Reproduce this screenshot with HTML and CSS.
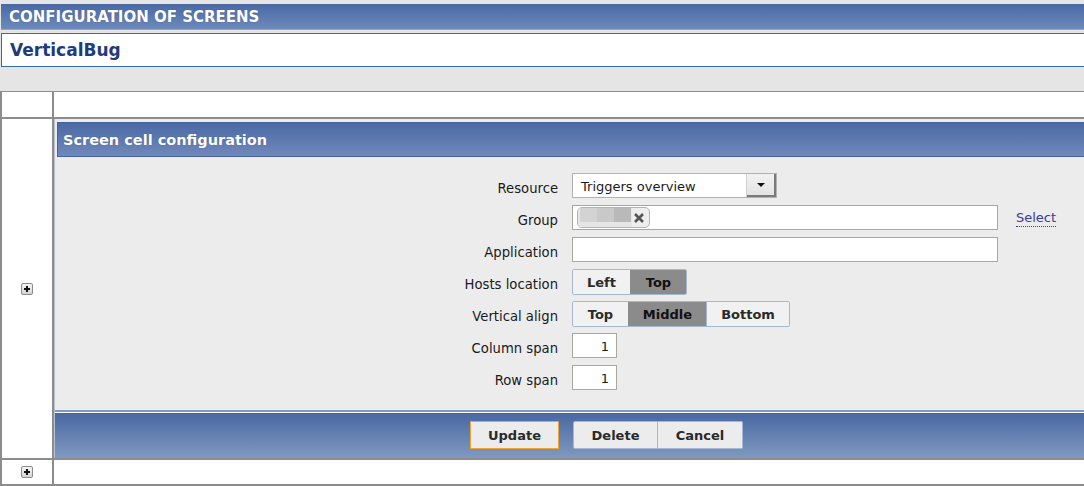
FILE: index.html
```html
<!DOCTYPE html>
<html>
<head>
<meta charset="utf-8">
<title>Configuration of screens</title>
<link rel="stylesheet" href="styles.css">
</head>
<body>
<div class="top-strip"></div>
<div class="page-header">CONFIGURATION OF SCREENS</div>
<div class="title-box">VerticalBug</div>

<div class="screen">
  <div class="cell"></div>
  <div class="cell"></div>

  <div class="cell cell-center"><span class="plus"></span></div>
  <div class="cell">
    <div class="panel">
      <div class="panel-header">Screen cell configuration</div>
      <div class="form">
        <div class="row">
          <label class="lbl">Resource</label>
          <div class="select">
            <span class="select-text">Triggers overview</span>
            <span class="select-arrow"><span class="tri"></span></span>
          </div>
        </div>
        <div class="row">
          <label class="lbl">Group</label>
          <div class="input wide chip-input">
            <span class="chip">
              <span class="blur">
                <span class="b1"></span><span class="b2"></span><span class="b3"></span>
              </span>
              <svg class="x" width="12" height="12" viewBox="0 0 12 12"><path d="M2 2 L10 10 M10 2 L2 10" stroke="#555" stroke-width="2.6" stroke-linecap="butt"/></svg>
            </span>
          </div>
          <a class="select-link">Select</a>
        </div>
        <div class="row">
          <label class="lbl">Application</label>
          <div class="input wide"></div>
        </div>
        <div class="row">
          <label class="lbl">Hosts location</label>
          <div class="seg">
            <span class="seg-btn w-left">Left</span><span class="seg-btn on w-top2">Top</span>
          </div>
        </div>
        <div class="row">
          <label class="lbl">Vertical align</label>
          <div class="seg">
            <span class="seg-btn w-top">Top</span><span class="seg-btn on w-mid">Middle</span><span class="seg-btn w-bot">Bottom</span>
          </div>
        </div>
        <div class="row">
          <label class="lbl">Column span</label>
          <div class="input num">1</div>
        </div>
        <div class="row">
          <label class="lbl">Row span</label>
          <div class="input num">1</div>
        </div>
      </div>
      <div class="sep"></div>
      <div class="footer">
        <button class="btn primary">Update</button>
        <div class="btn-group">
          <button class="btn">Delete</button><button class="btn">Cancel</button>
        </div>
      </div>
    </div>
  </div>

  <div class="cell cell-center"><span class="plus"></span></div>
  <div class="cell"></div>
</div>
</body>
</html>
```
FILE: styles.css
```css
html, body {
  margin: 0;
  padding: 0;
}
body {
  background: #e5e5e5;
  font-family: "DejaVu Sans", Verdana, sans-serif;
  color: #1a1a1a;
  overflow: hidden;
}
.top-strip {
  height: 4px;
}
.page-header {
  height: 25px;
  margin-left: 1px;
  padding-left: 8px;
  background: linear-gradient(#4a69a4, #6d8abb);
  border-bottom: 1px solid #9aa5b8;
  color: #fff;
  font-weight: bold;
  font-size: 15px;
  line-height: 26px;
  text-shadow: 0 0 1px rgba(30, 50, 90, 0.6);
}
.title-box {
  margin: 3px 0 0 1px;
  height: 32px;
  background: #fff;
  border: 1px solid #2f6ea6;
  border-right: none;
  padding-left: 8px;
  color: #1f3b7c;
  font-weight: bold;
  font-size: 17px;
  line-height: 33px;
}
.screen {
  margin-top: 24px;
  display: grid;
  grid-template-columns: 50px 1fr;
  grid-template-rows: 25px 339px 24px;
  gap: 2px;
  padding: 1px 0 2px 2px;
  background: #8c8c8c;
}
.cell {
  background: #fff;
  min-width: 0;
}
.cell-center {
  display: flex;
  align-items: center;
  justify-content: center;
}
.plus {
  position: relative;
  width: 10px;
  height: 10px;
  border: 1px solid #8a8a8a;
  border-radius: 2px;
  background: linear-gradient(#f4f4f4, #d4d4d4);
  display: block;
}
.plus::before, .plus::after {
  content: "";
  position: absolute;
  background: #111;
}
.plus::before {
  left: 2px;
  top: 4px;
  width: 6px;
  height: 2px;
}
.plus::after {
  left: 4px;
  top: 2px;
  width: 2px;
  height: 6px;
}
.panel {
  height: 100%;
  background: #ececec;
  display: flex;
  flex-direction: column;
  border-left: 1px solid #b9c3cf;
  box-sizing: border-box;
}
.panel-header {
  margin: 3px 0 0 2px;
  height: 33px;
  background: linear-gradient(#4a69a4, #7089bb);
  border: 1px solid #46629a;
  border-right: none;
  color: #fff;
  font-weight: bold;
  font-size: 14.5px;
  line-height: 34px;
  padding-left: 5px;
  text-shadow: 0 0 1px rgba(30, 50, 90, 0.6);
}
.form {
  padding: 16px 0 20px 0;
  display: flex;
  flex-direction: column;
  gap: 7px;
}
.row {
  display: flex;
  align-items: center;
  height: 25px;
}
.lbl {
  width: 503px;
  text-align: right;
  font-size: 13.2px;
  color: #1a1a1a;
  margin-right: 14px;
  flex-shrink: 0;
  padding-top: 5px;
}
.select {
  box-sizing: border-box;
  width: 205px;
  height: 25px;
  background: #fff;
  border: 1px solid #b2b2b2;
  display: flex;
  align-items: stretch;
}
.select-text {
  flex: 1;
  font-size: 13px;
  line-height: 25px;
  padding-left: 8px;
}
.select-arrow {
  width: 29px;
  background: linear-gradient(#f2f2f2, #e2e2e2);
  border-left: 1px solid #d0d0d0;
  box-shadow: inset -2px -2px 0 #7a7a7a;
  display: flex;
  align-items: center;
  justify-content: center;
}
.tri {
  width: 0;
  height: 0;
  border-left: 4px solid transparent;
  border-right: 4px solid transparent;
  border-top: 4px solid #111;
  margin: 0 2px 2px 0;
}
.input {
  box-sizing: border-box;
  height: 25px;
  background: #fff;
  border: 1px solid #aaa79d;
}
.wide {
  width: 426px;
}
.num {
  width: 45px;
  font-size: 13px;
  text-align: right;
  line-height: 25px;
  padding-right: 7px;
}
.chip-input {
  padding: 1px 4px;
}
.chip {
  box-sizing: border-box;
  display: flex;
  align-items: center;
  width: 73px;
  height: 21px;
  border: 1px solid #b4b4b4;
  border-radius: 5px;
  background: #eeeeee;
  overflow: hidden;
}
.blur {
  display: flex;
  height: 100%;
  width: 54px;
  background: #e6e6e6;
}
.blur span {
  display: block;
  width: 17px;
  height: 14px;
}
.blur .b1 { background: #d3d3d3; margin-left: 2px; }
.blur .b2 { background: #c9c9c9; }
.blur .b3 { background: #b9b9b9; }
.x {
  margin-left: 1px;
}
.select-link {
  margin-left: 18px;
  font-size: 13px;
  color: #3a3a9c;
  border-bottom: 1px dotted #3a3a9c;
  padding-bottom: 1px;
  margin-top: 2px;
  cursor: pointer;
}
.seg {
  display: flex;
  height: 26px;
  box-sizing: border-box;
  border: 1px solid #a5b8d3;
  border-radius: 2px;
  overflow: hidden;
}
.seg-btn {
  display: flex;
  align-items: center;
  justify-content: center;
  background: #f1f1f1;
  font-weight: bold;
  font-size: 13px;
  color: #2a2a2a;
  border-left: 1px solid #a5b8d3;
  box-sizing: border-box;
  padding-top: 1px;
}
.seg-btn:first-child {
  border-left: none;
}
.seg-btn.on {
  background: #8b8b8b;
  color: #111;
  border-left-color: #8b8b8b;
}
.w-left { width: 57px; }
.w-top2 { width: 56px; }
.w-top { width: 55px; }
.w-mid { width: 78px; }
.w-bot { width: 83px; }
.sep {
  height: 2px;
  background: #7e9bc2;
  border-bottom: 1px solid #fff;
}
.footer {
  height: 45px;
  box-sizing: border-box;
  background: linear-gradient(#4a69a3, #8099c0);
  border-top: 1px solid #4a63a0;
  padding: 7px 0 0 415px;
  display: flex;
  align-items: flex-start;
  gap: 14px;
}
.btn {
  height: 28px;
  box-sizing: border-box;
  background: #ececec;
  border: 1px solid #a5b8d3;
  font-family: "DejaVu Sans", Verdana, sans-serif;
  font-weight: bold;
  font-size: 13px;
  color: #2a2a2a;
  padding: 0;
  margin: 0;
  border-radius: 2px;
}
.btn.primary {
  width: 89px;
  border-color: #f0a52e;
  border-radius: 0;
}
.btn-group {
  display: flex;
}
.btn-group .btn {
  width: 85px;
  border-radius: 0;
}
.btn-group .btn:first-child {
  border-radius: 2px 0 0 2px;
}
.btn-group .btn:last-child {
  border-left: none;
  border-radius: 0 2px 2px 0;
}
```
